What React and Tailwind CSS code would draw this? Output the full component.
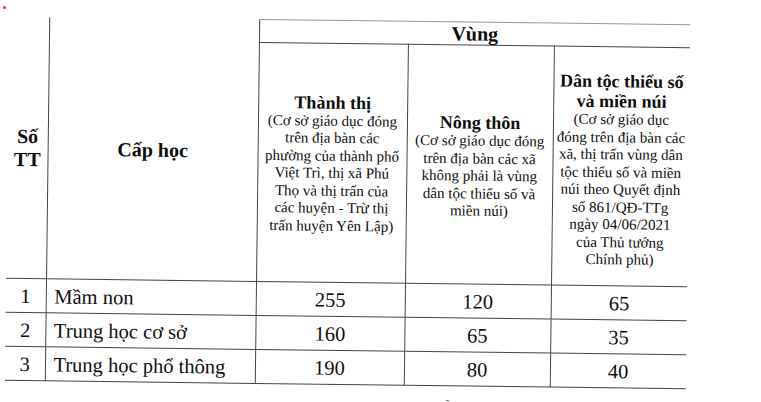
const rows = [
  { no: '1', level: 'Mầm non', urban: '255', rural: '120', ethnic: '65' },
  { no: '2', level: 'Trung học cơ sở', urban: '160', rural: '65', ethnic: '35' },
  { no: '3', level: 'Trung học phổ thông', urban: '190', rural: '80', ethnic: '40' },
];

function Lines({ lines }) {
  return (
    <div className="text-[15px] leading-[17.5px]">
      {lines.map((line) => (
        <div key={line} className="whitespace-nowrap">
          {line}
        </div>
      ))}
    </div>
  );
}

export default function App() {
  return (
    <div
      className="relative h-[402px] w-[761px] overflow-hidden bg-white text-[#0e0e0e]"
      style={{ fontFamily: '"Liberation Serif", "Times New Roman", serif' }}
    >
      <span className="absolute left-[3px] top-[6px] h-[3px] w-[3px] rounded-full bg-[#ef2a2a]" />
      <div className="pl-[7px] pt-[20px]">
        <table className="w-[681px] rotate-[0.7deg] table-fixed border-collapse">
          <colgroup>
            <col className="w-[40px]" />
            <col className="w-[210px]" />
            <col className="w-[149px]" />
            <col className="w-[146px]" />
            <col className="w-[136px]" />
          </colgroup>
          <thead>
            <tr className="h-[23px]">
              <th
                rowSpan={2}
                className="border-b border-r border-[#444] p-0 text-center align-middle text-[20px] font-bold leading-[23px]"
              >
                <div className="pt-[1px]">
                  Số
                  <br />
                  TT
                </div>
              </th>
              <th
                rowSpan={2}
                className="border-b border-r border-[#444] p-0 text-center align-middle text-[20px] font-bold leading-[24px]"
              >
                <div className="pt-[2px]">Cấp học</div>
              </th>
              <th
                colSpan={3}
                className="border-b border-t border-b-[#444] border-t-[#9a93a0] p-0 text-center text-[20px] font-bold leading-[22px]"
              >
                Vùng
              </th>
            </tr>
            <tr className="h-[239px]">
              <th className="border-b border-r border-[#444] p-0 text-center align-middle font-normal">
                <div className="pt-[2px]">
                  <div className="text-[18px] font-bold leading-[20px]">Thành thị</div>
                  <Lines
                    lines={[
                      '(Cơ sở giáo dục đóng',
                      'trên địa bàn các',
                      'phường của thành phố',
                      'Việt Trì, thị xã Phú',
                      'Thọ và thị trấn của',
                      'các huyện - Trừ thị',
                      'trấn huyện Yên Lập)',
                    ]}
                  />
                </div>
              </th>
              <th className="border-b border-r border-[#444] p-0 text-center align-middle font-normal">
                <div className="pt-[4px]">
                  <div className="text-[18px] font-bold leading-[20px]">Nông thôn</div>
                  <Lines
                    lines={[
                      '(Cơ sở giáo dục đóng',
                      'trên địa bàn các xã',
                      'không phải là vùng',
                      'dân tộc thiểu số và',
                      'miền núi)',
                    ]}
                  />
                </div>
              </th>
              <th className="border-b border-[#444] p-0 text-center align-middle font-normal">
                <div className="pt-[8px]">
                  <div className="text-[18px] font-bold leading-[20px]">
                    Dân tộc thiểu số
                    <br />
                    và miền núi
                  </div>
                  <Lines
                    lines={[
                      '(Cơ sở giáo dục',
                      'đóng trên địa bàn các',
                      'xã, thị trấn vùng dân',
                      'tộc thiểu số và miền',
                      'núi theo Quyết định',
                      'số 861/QĐ-TTg',
                      'ngày 04/06/2021',
                      'của Thủ tướng',
                      'Chính phủ)',
                    ]}
                  />
                </div>
              </th>
            </tr>
          </thead>
          <tbody className="text-[20.5px] leading-[24px]">
            {rows.map((row) => (
              <tr key={row.no} className="h-[34px]">
                <td className="border-b border-r border-[#444] p-0 text-center">{row.no}</td>
                <td className="border-b border-r border-[#444] p-0 pl-[8px] text-left whitespace-nowrap">
                  {row.level}
                </td>
                <td className="border-b border-r border-[#444] p-0 text-center">{row.urban}</td>
                <td className="border-b border-r border-[#444] p-0 text-center">{row.rural}</td>
                <td className="border-b border-[#444] p-0 text-center">{row.ethnic}</td>
              </tr>
            ))}
          </tbody>
        </table>
      </div>
      <span className="absolute left-[446px] top-[400px] h-[1px] w-[3px] bg-[#777]" />
    </div>
  );
}
